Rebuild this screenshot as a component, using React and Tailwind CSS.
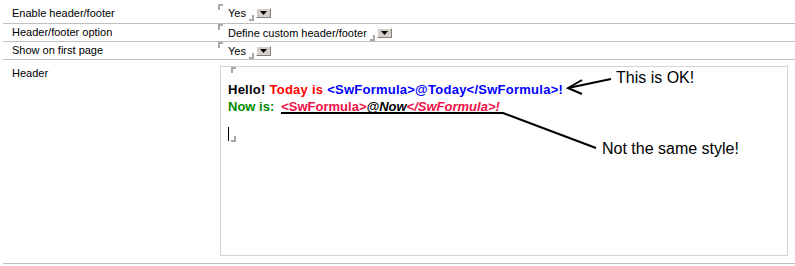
import React from "react";

// little gray field markers the editor draws around a value
function StartMark({ className = "" }) {
  return <span className={"block w-[5px] h-[6px] border-t-2 border-l-2 border-[#a8a8a8] " + className} />;
}

function EndMark({ className = "" }) {
  return <span className={"block w-[5px] h-[6px] border-b-2 border-r-2 border-[#a8a8a8] " + className} />;
}

function DropButton() {
  return (
    <span className="self-center ml-[2px] flex items-center justify-center w-[15px] h-[10px] bg-[#d4d0c8] border border-t-[#ffffff] border-l-[#ffffff] border-b-[#808080] border-r-[#808080]">
      <svg width="7" height="4" viewBox="0 0 7 4">
        <path d="M0 0h7L3.5 4z" fill="#000" />
      </svg>
    </span>
  );
}

function SelectValue({ value }) {
  return (
    <div className="flex h-[14px]">
      <StartMark className="self-start -mt-[2px]" />
      <span className="ml-[5px] leading-[14px]">{value}</span>
      <EndMark className="self-end ml-[3px] mb-[-1px]" />
      <DropButton />
    </div>
  );
}

function Row({ label, value, height }) {
  return (
    <div className={"flex items-center border-b border-[#c0c0c0] " + height}>
      <div className="w-[215px] pl-[9px]">{label}</div>
      <SelectValue value={value} />
    </div>
  );
}

export default function App() {
  return (
    <div
      className="relative w-[795px] h-[266px] bg-white text-[11px] text-black overflow-hidden"
      style={{ fontFamily: '"Liberation Sans", Arial, sans-serif' }}
    >
      <div className="ml-[3px]">
        <div className="flex items-center border-b border-[#c0c0c0] h-[24px] pt-[3px]">
          <div className="w-[215px] pl-[9px]">Enable header/footer</div>
          <SelectValue value="Yes" />
        </div>
        <Row label="Header/footer option" value="Define custom header/footer" height="h-[18px]" />
        <Row label="Show on first page" value="Yes" height="h-[18px]" />

        <div className="flex items-start border-b border-[#c0c0c0] h-[204px] pt-[6px]">
          <div className="w-[215px] pl-[9px] leading-[14px]">Header</div>
          <div className="ml-[2px] w-[568px] h-[190px] border border-[#d4d4d4] pl-[7px]">
            <StartMark className="ml-[3px]" />
            <div className="mt-[8px] text-[13px] font-bold leading-[17px] tracking-[0.25px] whitespace-nowrap">
              <span>Hello! </span>
              <span className="text-[#ff0000]">Today is </span>
              <span className="text-[#0000ff]">&lt;SwFormula&gt;@Today&lt;/SwFormula&gt;!</span>
            </div>
            <div className="text-[13px] font-bold leading-[17px] whitespace-nowrap">
              <span className="text-[#008a00]">Now is:</span>
              <span className="ml-[7px] text-[#f01048]">&lt;SwFormula&gt;</span>
              <span className="italic">@Now</span>
              <span className="italic text-[#f01048]">&lt;/SwFormula&gt;!</span>
            </div>
            <div className="mt-[12px] flex h-[14px]">
              <span className="block w-px h-[14px] bg-black" />
              <EndMark className="self-end ml-[2px] mb-[-1px]" />
            </div>
          </div>
        </div>
      </div>

      {/* annotations drawn over the screenshot */}
      <svg className="absolute inset-0 pointer-events-none" width="795" height="266" viewBox="0 0 795 266">
        <polyline points="281,113 503,113 596,148" fill="none" stroke="#000" strokeWidth="2" />
        <line x1="611" y1="79" x2="568" y2="88" stroke="#000" strokeWidth="2" />
        <polyline points="582,80 568,88 582,94" fill="none" stroke="#000" strokeWidth="2" />
      </svg>
      <span className="absolute left-[616px] top-[70px] text-[16px] leading-none">This is OK!</span>
      <span className="absolute left-[602px] top-[141px] text-[16px] leading-none">Not the same style!</span>
    </div>
  );
}
